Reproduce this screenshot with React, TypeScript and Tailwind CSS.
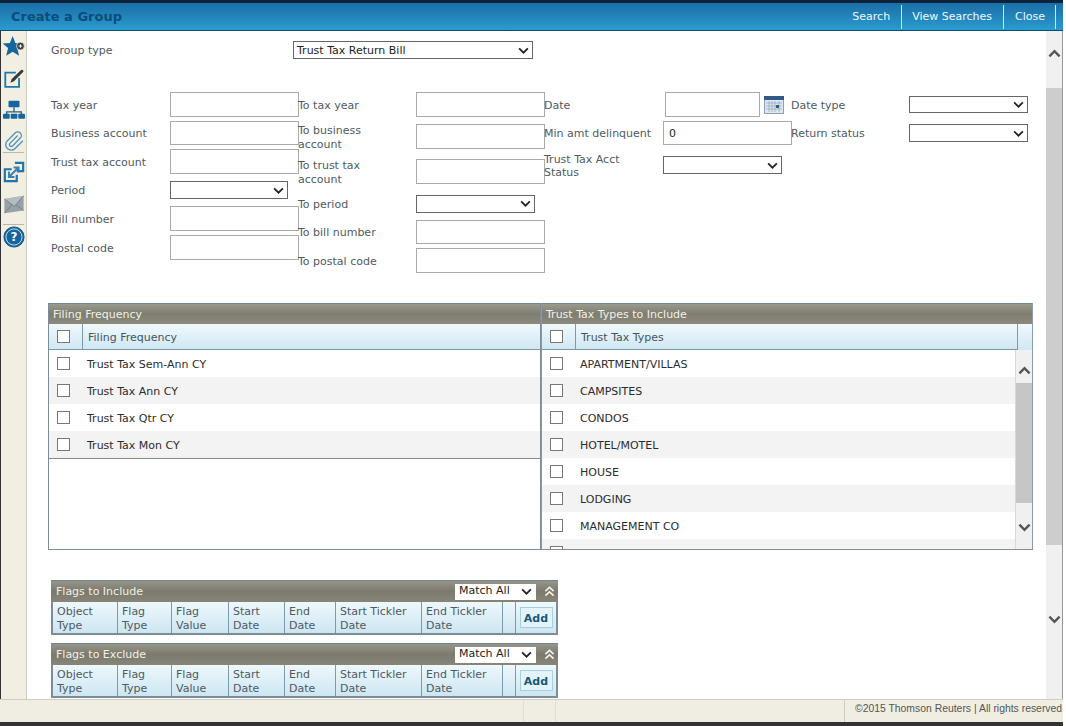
import type { ReactNode } from 'react'

const filingRows = ['Trust Tax Sem-Ann CY', 'Trust Tax Ann CY', 'Trust Tax Qtr CY', 'Trust Tax Mon CY']
const taxTypes = ['APARTMENT/VILLAS', 'CAMPSITES', 'CONDOS', 'HOTEL/MOTEL', 'HOUSE', 'LODGING', 'MANAGEMENT CO', '']
const flagColumns = [
  { label: ['Object', 'Type'], width: 'w-[65px]' },
  { label: ['Flag', 'Type'], width: 'w-[54px]' },
  { label: ['Flag', 'Value'], width: 'w-[57px]' },
  { label: ['Start', 'Date'], width: 'w-[56px]' },
  { label: ['End', 'Date'], width: 'w-[51px]' },
  { label: ['Start Tickler', 'Date'], width: 'w-[86px]' },
  { label: ['End Tickler', 'Date'], width: 'w-[81px]' },
  { label: ['', ''], width: 'w-[13px]' },
]

function Chevron({ className = 'text-[#222]' }: { className?: string }) {
  return (
    <svg viewBox="0 0 12 8" className={`h-[7px] w-[11px] ${className}`} fill="none" stroke="currentColor" strokeWidth="2">
      <path d="M1 1.5l5 5 5-5" />
    </svg>
  )
}

function ScrollArrow({ down = false }: { down?: boolean }) {
  return (
    <svg viewBox="0 0 14 9" className="h-[9px] w-[13px] text-[#555]" fill="none" stroke="currentColor" strokeWidth="2.6">
      <path d={down ? 'M1.5 1.5L7 7l5.5-5.5' : 'M1.5 7.5L7 2l5.5 5.5'} />
    </svg>
  )
}

function SelectBox({ value = '', className }: { value?: string; className: string }) {
  return (
    <div className={`flex shrink-0 items-center justify-between border border-[#666] bg-white pl-[3px] pr-[3px] text-[#222] ${className}`}>
      <span className="pt-[2px]">{value}</span>
      <Chevron />
    </div>
  )
}

function TextBox({ value = '', className = 'h-[25px] w-[129px]' }: { value?: string; className?: string }) {
  return <div className={`flex shrink-0 items-center border border-[#aaa] bg-white pl-[5px] pt-[2px] text-[#222] ${className}`}>{value}</div>
}

function Field({ label, className, labelWidth = 'w-[119px]', children }: { label: string; className: string; labelWidth?: string; children: ReactNode }) {
  return (
    <div className={`flex items-center ${className}`}>
      <div className={`shrink-0 pt-[2px] leading-[13.5px] text-[#4f5a62] ${labelWidth}`}>{label}</div>
      {children}
    </div>
  )
}

function Checkbox() {
  return <div className="h-[13px] w-[13px] shrink-0 border border-[#777] bg-white" />
}

function PanelTitle({ children }: { children: ReactNode }) {
  return (
    <div className="flex h-[21px] items-center border-t border-[#6f8794] bg-linear-to-b from-[#9a9a90] via-[#7e7d6f] to-[#8b8a7c] px-[4px] pt-[2px] text-[#f1f1ea]">
      {children}
    </div>
  )
}

function GridHeader({ title, filler = false }: { title: string; filler?: boolean }) {
  return (
    <div className="flex h-[26px] shrink-0 bg-linear-to-b from-[#f0f9fd] to-[#cfe7f3]">
      <div className={`flex flex-1 items-center border-b border-[#7d9aaa] ${filler ? 'border-r' : ''}`}>
        <div className="flex h-full w-[34px] shrink-0 items-center border-r border-[#7d9aaa] pl-[8px]">
          <Checkbox />
        </div>
        <div className="pl-[5px] pt-[4px] text-[#44555f]">{title}</div>
      </div>
      {filler && <div className="w-[14px] shrink-0" />}
    </div>
  )
}

function GridRow({ text, odd }: { text: string; odd: boolean }) {
  return (
    <div className={`flex h-[27px] shrink-0 items-center text-[#2c2c2c] ${odd ? 'bg-[#f3f3f3]' : 'bg-white'}`}>
      <div className="flex w-[28px] justify-center">
        <Checkbox />
      </div>
      <div className="pl-[10px] pt-[4px]">{text}</div>
    </div>
  )
}

function FlagsPanel({ title, className }: { title: string; className: string }) {
  return (
    <div className={`h-[55px] w-[507px] shrink-0 border-x-2 border-b-2 border-[#7d8d95] bg-[#7d8d95] ${className}`}>
      <div className="-mx-[2px] flex h-[22px] items-center border-t border-[#6f8794] bg-linear-to-b from-[#96958a] via-[#7b7a6c] to-[#868578] pl-[5px] pr-[3px] text-[#f1f1ea]">
        <span className="flex-1 pt-[2px]">{title}</span>
        <div className="flex h-[16px] w-[81px] items-center justify-between bg-white pl-[4px] pr-[4px] text-[#222]">
          <span>Match All</span>
          <Chevron />
        </div>
        <svg viewBox="0 0 12 12" className="ml-[8px] h-[11px] w-[11px] text-[#f2f2ea]" fill="none" stroke="currentColor" strokeWidth="1.8">
          <path d="M1.5 5.5L6 1.5l4.5 4M1.5 10.5L6 6.5l4.5 4" />
        </svg>
      </div>
      <div className="flex h-[31px] bg-linear-to-b from-[#eef8fc] to-[#cde6f2] leading-[14px] text-[#4f5a62]">
        {flagColumns.map((col, i) => (
          <div key={i} className={`flex shrink-0 flex-col justify-center border-r border-[#7d9aaa] pl-[4px] pt-[2px] ${col.width}`}>
            <span>{col.label[0]}</span>
            <span>{col.label[1]}</span>
          </div>
        ))}
        <div className="flex flex-1 items-center justify-center">
          <div className="flex h-[21px] w-[33px] items-center justify-center border border-[#a9cfdf] bg-[#e4f3fa] pt-[2px] font-bold text-[#155a7c]">Add</div>
        </div>
      </div>
    </div>
  )
}

function SideIcons() {
  return (
    <div className="flex flex-col items-center pt-[5px]">
      {/* favourite star */}
      <svg viewBox="0 0 24 24" className="h-[22px] w-[22px]">
        <path d="M10.500 0l3 7.500 8 .6-6 5.100 2 8.300-7-4.400-7 4.400 2-8.300-6-5.100 8-.6z" fill="#15669f" />
        <circle cx="19" cy="11" r="4.300" fill="#3c3c3c" stroke="#f1efe2" strokeWidth="0.800" />
        <path d="M17 11h4M19 9v4" stroke="#fff" strokeWidth="1" />
      </svg>
      {/* edit */}
      <svg viewBox="0 0 24 24" className="mt-[10px] h-[22px] w-[22px]">
        <path d="M14 5H2.500v15.500h15V11" fill="none" stroke="#2076ab" strokeWidth="2" />
        <path d="M8 16l1.500-4L20 2c1-.8 3 1 2.200 2.200L12 14.500z" fill="#3a3a3a" />
      </svg>
      {/* hierarchy */}
      <svg viewBox="0 0 24 24" className="mt-[9px] h-[22px] w-[22px]">
        <rect x="6" y="2" width="12" height="7" rx="1" fill="#15669f" />
        <path d="M12 9v5M4 17v-3h16v3" fill="none" stroke="#2f5f80" strokeWidth="1.500" />
        <rect x="0" y="16" width="7.300" height="5.500" rx="1" fill="#15669f" />
        <rect x="8.400" y="16" width="7.300" height="5.500" rx="1" fill="#15669f" />
        <rect x="16.700" y="16" width="7.300" height="5.500" rx="1" fill="#15669f" />
      </svg>
      {/* attachment */}
      <svg viewBox="0 0 24 24" className="mt-[9px] h-[22px] w-[22px]" fill="none" stroke="#5594bd" strokeWidth="1.500">
        <path d="m16 6-8.414 8.586a2 2 0 0 0 2.829 2.828l8.414-8.586a4 4 0 1 0-5.657-5.657l-8.379 8.551a6 6 0 1 0 8.485 8.485l8.379-8.551" />
      </svg>
      <div className="h-px w-[21px] bg-[#b8b7aa]" />
      {/* open in window */}
      <svg viewBox="0 0 24 24" className="mt-[8px] h-[22px] w-[22px]" fill="none" stroke="#2076ab" strokeWidth="2.400">
        <path d="M9.500 9H2v13h13v-7" />
        <path d="M13 2h9v9h-7" strokeWidth="2.400" />
        <path d="M7 17l9-9M11.500 7H17v5.500M6.500 11.500V17.500H12.500" strokeWidth="2.200" stroke="#3c82b0" />
      </svg>
      {/* mail */}
      <svg viewBox="0 0 24 24" className="mt-[10px] h-[22px] w-[22px]">
        <path d="M1.500 6.500l21-3.500v16l-21 3z" fill="#97a2a8" />
        <path d="M1.500 6.500l11 8L22.500 3" fill="#b3bcc1" stroke="#6b757b" strokeWidth="0.800" />
        <path d="M1.500 22l8.500-9.500M22.500 19l-8.500-6" fill="none" stroke="#6b757b" strokeWidth="0.800" />
      </svg>
      <div className="mt-[9px] h-px w-[21px] bg-[#b8b7aa]" />
      {/* help */}
      <svg viewBox="0 0 24 24" className="mt-px h-[22px] w-[22px]">
        <circle cx="12" cy="12" r="11" fill="#15669f" stroke="#0f4d78" strokeWidth="1" />
        <circle cx="12" cy="12" r="8.800" fill="none" stroke="#cfe4f0" strokeWidth="1" />
        <text x="12" y="16.500" textAnchor="middle" fontSize="13" fontWeight="700" fontFamily="'DejaVu Sans', sans-serif" fill="#fff">?</text>
      </svg>
    </div>
  )
}

export default function App() {
  return (
    <div className="flex h-[726px] w-[1066px] flex-col overflow-hidden bg-white pr-[3px] font-['DejaVu_Sans',sans-serif] text-[11px]">
      {/* title bar */}
      <div className="flex h-[31px] shrink-0 items-center border-t-[3px] border-b border-t-[#0a2338] border-b-[#0f4a70] bg-linear-to-b from-[#1a6fa6] to-[#2a9bd0] pl-[11px]">
        <div className="flex-1 text-[13px] font-bold text-[#0c4c7c]">Create a Group</div>
        <div className="flex h-[24px] items-center border-r border-[#cfe6f2] pr-[11px] pt-[2px] text-[#eef8fc]">Search</div>
        <div className="flex h-[24px] items-center border-r border-[#cfe6f2] pl-[10px] pr-[11px] pt-[2px] text-[#eef8fc]">View Searches</div>
        <div className="flex h-[24px] items-center border-r border-[#cfe6f2] pl-[11px] pr-[10px] pt-[2px] text-[#eef8fc]">Close</div>
        <div className="w-[7px]" />
      </div>

      <div className="flex min-h-0 flex-1 border-r border-[#999]">
        <div className="w-[27px] shrink-0 border-l border-r border-l-[#333] border-r-[#cfcdbf] bg-[#f1efe2]">
          <SideIcons />
        </div>

        {/* scrolling form */}
        <div className="min-w-0 flex-1 overflow-hidden">
          <div className="ml-[24px] mt-[10px] flex h-[18px] items-center">
            <div className="w-[242px] shrink-0 pt-[2px] text-[#4f5a62]">Group type</div>
            <SelectBox value="Trust Tax Return Bill" className="h-[18px] w-[240px]" />
          </div>

          <div className="ml-[24px] mt-[33px] flex h-[211px] items-start">
            <div className="flex w-[247px] shrink-0 flex-col">
              <Field label="Tax year" className="h-[25px]"><TextBox /></Field>
              <Field label="Business account" className="mt-[4px] h-[24px]"><TextBox className="h-[24px] w-[129px]" /></Field>
              <Field label="Trust tax account" className="mt-[4px] h-[25px]"><TextBox /></Field>
              <Field label="Period" className="mt-[7px] h-[18px]"><SelectBox className="h-[18px] w-[118px]" /></Field>
              <Field label="Bill number" className="mt-[7px] h-[25px]"><TextBox /></Field>
              <Field label="Postal code" className="mt-[4px] h-[25px]"><TextBox /></Field>
            </div>
            <div className="flex w-[246px] shrink-0 flex-col">
              <Field label="To tax year" labelWidth="w-[118px]" className="h-[25px]"><TextBox /></Field>
              <Field label="To business account" labelWidth="w-[118px] pr-[14px]" className="mt-[7px] h-[25px]"><TextBox /></Field>
              <Field label="To trust tax account" labelWidth="w-[118px] pr-[14px]" className="mt-[10px] h-[25px]"><TextBox /></Field>
              <Field label="To period" labelWidth="w-[118px]" className="mt-[11px] h-[17px]"><SelectBox className="h-[18px] w-[119px]" /></Field>
              <Field label="To bill number" labelWidth="w-[118px]" className="mt-[8px] h-[24px]"><TextBox className="h-[24px] w-[129px]" /></Field>
              <Field label="To postal code" labelWidth="w-[118px]" className="mt-[4px] h-[25px]"><TextBox /></Field>
            </div>
            <div className="flex w-[247px] shrink-0 flex-col">
              <Field label="Date" labelWidth="w-[121px]" className="h-[25px]">
                <TextBox className="h-[25px] w-[95px]" />
                <svg viewBox="0 0 20 18" className="ml-[4px] h-[18px] w-[20px]">
                  <rect x="0.500" y="0.500" width="19" height="17" fill="#dfe7ef" stroke="#8aa0b8" />
                  <rect x="0" y="0" width="20" height="4" fill="#33598a" />
                  <path d="M2 7h16M2 10h16M2 13h16M5 5v11M8 5v11M11 5v11M15 5v11" stroke="#8ca3bb" strokeWidth="0.700" fill="none" />
                  <rect x="12" y="9" width="3" height="3" fill="#33598a" />
                </svg>
              </Field>
              <Field label="Min amt delinquent" className="mt-[4px] h-[24px]"><TextBox value="0" className="h-[24px] w-[129px]" /></Field>
              <Field label="Trust Tax Acct Status" labelWidth="w-[119px] pr-[14px]" className="mt-[11px] h-[18px]"><SelectBox className="h-[18px] w-[119px]" /></Field>
            </div>
            <div className="flex shrink-0 flex-col pt-[4px]">
              <Field label="Date type" labelWidth="w-[118px]" className="h-[17px]"><SelectBox className="h-[17px] w-[119px]" /></Field>
              <Field label="Return status" labelWidth="w-[118px]" className="mt-[11px] h-[18px]"><SelectBox className="h-[18px] w-[119px]" /></Field>
            </div>
          </div>

          {/* pick lists */}
          <div className="ml-[21px] flex h-[247px] w-[985px] border-b border-[#7d8d95]">
            <div className="flex w-[493px] shrink-0 flex-col border-x border-[#7d8d95]">
              <PanelTitle>Filing Frequency</PanelTitle>
              <GridHeader title="Filing Frequency" />
              <div className="border-b border-[#888]">
                {filingRows.map((row, i) => (
                  <GridRow key={row} text={row} odd={i % 2 === 1} />
                ))}
              </div>
            </div>
            <div className="flex w-[492px] shrink-0 flex-col border-x border-[#8a9aa3]">
              <PanelTitle>Trust Tax Types to Include</PanelTitle>
              <GridHeader title="Trust Tax Types" filler />
              <div className="flex min-h-0 flex-1">
                <div className="min-w-0 flex-1 overflow-hidden">
                  {taxTypes.map((row, i) => (
                    <GridRow key={i} text={row} odd={i % 2 === 1} />
                  ))}
                </div>
                <div className="flex w-[17px] shrink-0 flex-col items-center border-l border-[#d8d8d8] bg-[#f0f0f0]">
                  <div className="flex h-[33px] shrink-0 items-end pb-[8px]"><ScrollArrow /></div>
                  <div className="h-[120px] w-full shrink-0 bg-[#c6c6c6]" />
                  <div className="flex h-[40px] items-start pt-[20px]"><ScrollArrow down /></div>
                </div>
              </div>
            </div>
          </div>

          {/* flags */}
          <div className="ml-[24px] mt-[30px] flex flex-col">
            <FlagsPanel title="Flags to Include" className="" />
            <FlagsPanel title="Flags to Exclude" className="mt-[8px]" />
          </div>
        </div>

        {/* page scrollbar */}
        <div className="flex w-[16px] shrink-0 flex-col items-center bg-[#f0f0f0]">
          <div className="flex h-[57px] items-start pt-[18px]"><ScrollArrow /></div>
          <div className="h-[457px] w-full bg-[#cdcdcd]" />
          <div className="pt-[70px]"><ScrollArrow down /></div>
        </div>
      </div>

      {/* footer */}
      <div className="flex h-[27px] shrink-0 items-stretch border-t border-[#cfcdbf] border-b-[4px] border-b-[#333] bg-[#f0eee2]">
        <div className="ml-[523px] w-[33px] shrink-0 border-x border-[#e0ded2]" />
        <div className="ml-[288px] whitespace-nowrap border-l border-[#cfcdbf] pl-[10px] font-['Liberation_Sans',sans-serif] text-[10.4px] leading-[17px] text-[#555]">©2015 Thomson Reuters | All rights reserved</div>
      </div>
    </div>
  )
}
